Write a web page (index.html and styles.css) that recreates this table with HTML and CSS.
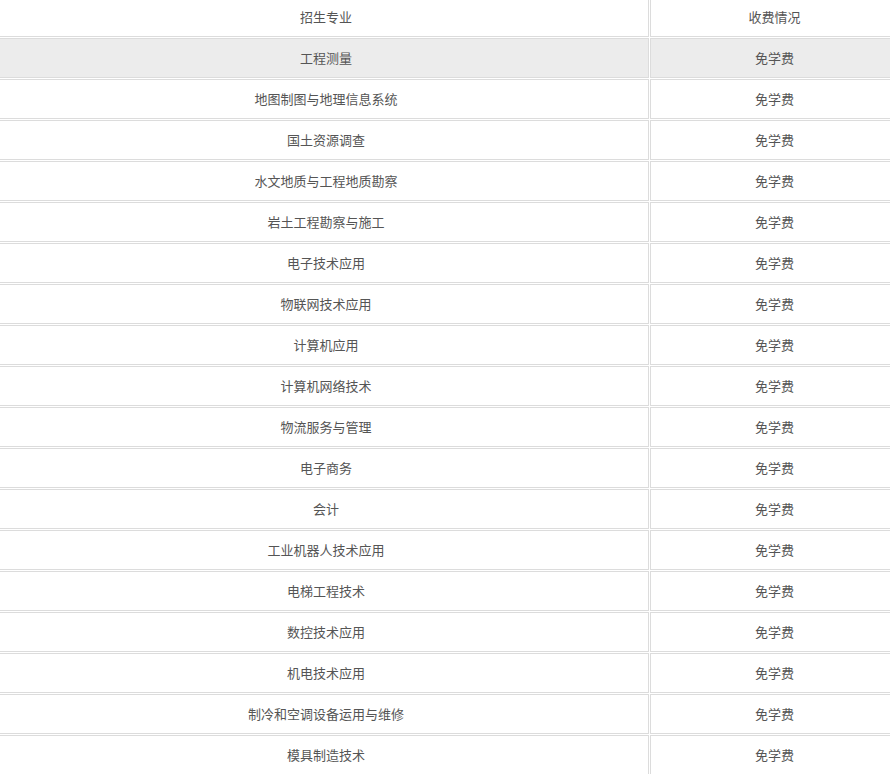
FILE: index.html
```html
<!DOCTYPE html>
<html lang="zh-CN">
<head>
<meta charset="utf-8">
<title>招生专业</title>
<link rel="stylesheet" href="styles.css">
</head>
<body>
<table class="fees">
  <colgroup><col class="c-major"><col class="c-fee"></colgroup>
  <tbody>
    <tr><td class="major">招生专业</td><td class="fee">收费情况</td></tr>
    <tr class="hl"><td class="major">工程测量</td><td class="fee">免学费</td></tr>
    <tr><td class="major">地图制图与地理信息系统</td><td class="fee">免学费</td></tr>
    <tr><td class="major">国土资源调查</td><td class="fee">免学费</td></tr>
    <tr><td class="major">水文地质与工程地质勘察</td><td class="fee">免学费</td></tr>
    <tr><td class="major">岩土工程勘察与施工</td><td class="fee">免学费</td></tr>
    <tr><td class="major">电子技术应用</td><td class="fee">免学费</td></tr>
    <tr><td class="major">物联网技术应用</td><td class="fee">免学费</td></tr>
    <tr><td class="major">计算机应用</td><td class="fee">免学费</td></tr>
    <tr><td class="major">计算机网络技术</td><td class="fee">免学费</td></tr>
    <tr><td class="major">物流服务与管理</td><td class="fee">免学费</td></tr>
    <tr><td class="major">电子商务</td><td class="fee">免学费</td></tr>
    <tr><td class="major">会计</td><td class="fee">免学费</td></tr>
    <tr><td class="major">工业机器人技术应用</td><td class="fee">免学费</td></tr>
    <tr><td class="major">电梯工程技术</td><td class="fee">免学费</td></tr>
    <tr><td class="major">数控技术应用</td><td class="fee">免学费</td></tr>
    <tr><td class="major">机电技术应用</td><td class="fee">免学费</td></tr>
    <tr><td class="major">制冷和空调设备运用与维修</td><td class="fee">免学费</td></tr>
    <tr><td class="major">模具制造技术</td><td class="fee">免学费</td></tr>
    <tr><td class="major">&nbsp;</td><td class="fee">&nbsp;</td></tr>
  </tbody>
</table>
</body>
</html>
```
FILE: styles.css
```css
html, body {
  margin: 0;
  padding: 0;
  overflow: hidden;
  background: #fff;
}

.fees {
  margin-left: -2px;
  margin-top: -4px;
  width: 902px;
  table-layout: fixed;
  border-collapse: separate;
  border-spacing: 1px;
  font-family: "Microsoft YaHei", "Noto Sans CJK SC", "Noto Sans", sans-serif;
  font-size: 13px;
  color: #555;
}

.c-major { width: 650px; }
.c-fee { width: 249px; }

.fees td {
  height: 37px;
  padding: 0 0 1px 0;
  border: 1px solid #dcdcdc;
  text-align: center;
  vertical-align: middle;
  line-height: 20px;
  box-sizing: content-box;
}

.fees td.major {
  padding-left: 4px;
}

.fees tr.hl td {
  background: #ececec;
}
```
